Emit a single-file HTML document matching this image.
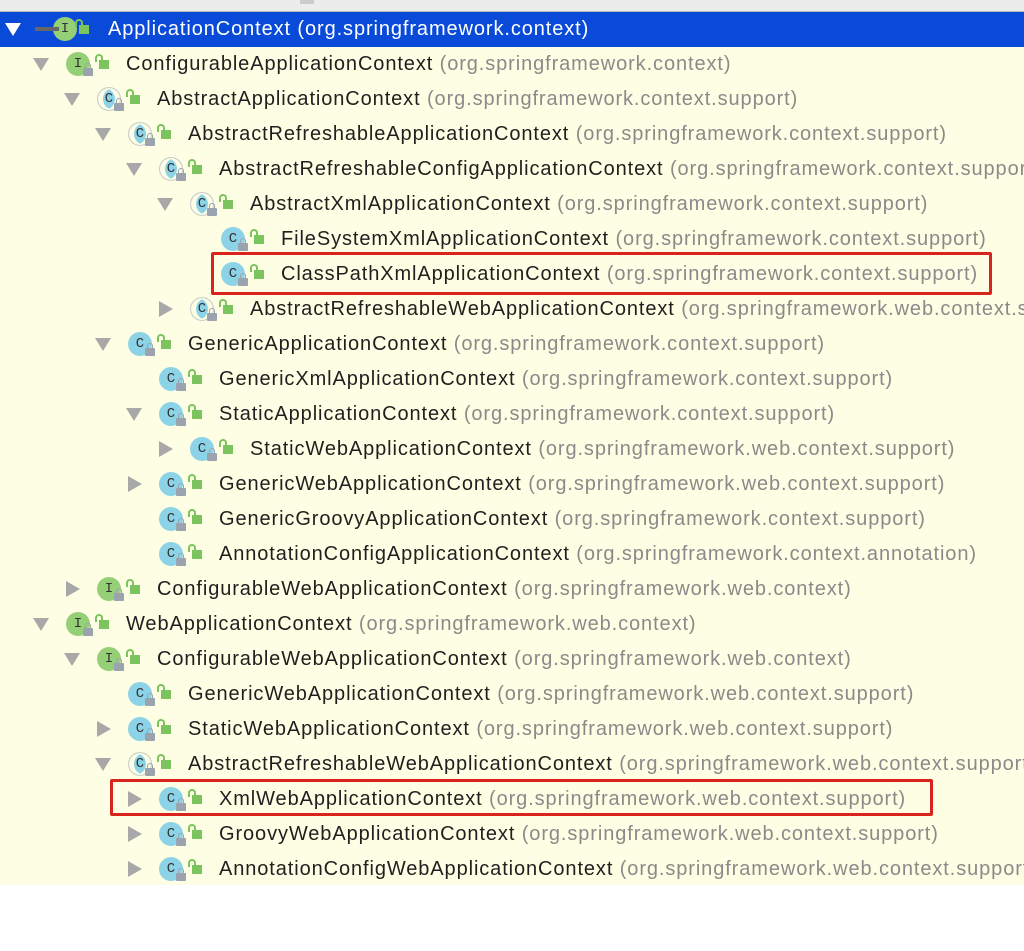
<!DOCTYPE html>
<html><head><meta charset="utf-8"><style>
body{margin:0;width:1024px;height:951px;background:#fff;position:relative;overflow:hidden;font-family:"Liberation Sans",sans-serif}
.wrap{position:absolute;left:0;top:0;width:1024px;height:951px;overflow:hidden}
.top{position:absolute;left:0;top:0;width:1024px;height:11px;background:#ececec;border-bottom:1px solid #b8b8b8}
.bg{position:absolute;left:0;top:12px;width:1024px;height:873px;background:#fefee4}
.sel{position:absolute;left:0;top:12px;width:1024px;height:35px;background:#0a4ad9}
.r{position:absolute;height:35px;white-space:nowrap;font-size:20px;letter-spacing:0.9px}
.r>*{position:absolute}
.ad{left:0;top:11px;width:0;height:0;border-left:8px solid transparent;border-right:8px solid transparent;border-top:13px solid #a8a8a8}
.ar{left:2px;top:9px;width:0;height:0;border-top:8px solid transparent;border-bottom:8px solid transparent;border-left:14px solid #a8a8a8}
.ic{left:33px;top:5px;width:24px;height:24px;border-radius:50%;font:14px "Liberation Mono",monospace;line-height:24px;text-align:center;color:#333;letter-spacing:0}
.I{background:#95cf76}
.C{background:#8dd3e8}
.A{background:#8dd3e8;box-shadow:inset 5px 0 0 #fefee4,inset -5px 0 0 #fefee4;border:1px solid #ccc;width:22px;height:22px;line-height:22px}
.lk{left:50px;top:21px;width:10px;height:8px;background:#9aa3ae;border-radius:1px}
.lk:before{content:"";position:absolute;left:2px;top:-5px;width:4px;height:5px;border:1px solid #9aa3ae;border-bottom:none;border-radius:3px 3px 0 0}
.g{left:66px;top:13px;width:10px;height:9px;background:#7cc45e}
.g:before{content:"";position:absolute;left:-4px;top:-6px;width:4px;height:6px;border:2px solid #7cc45e;border-bottom:none;border-radius:4px 4px 0 0}
.t{left:93px;top:6px;color:#1f1f1f;font-weight:normal}
.t span{color:#8a8a8a}
.box{position:absolute;border:3px solid #d8241c;border-radius:2px}
</style></head><body><div class="wrap">
<div class="top"></div><div class="bg"></div><div class="sel"></div>
<div style="position:absolute;left:300px;top:0;width:14px;height:4px;background:#ccc"></div>

<div class="r" style="left:5px;top:12px"><i class="ad" style="border-top-color:#fff"></i><b class="ic I" style="left:48px">I</b><i style="left:30px;top:15px;width:24px;height:4px;background:#666"></i><i class="g" style="left:74px"></i><b class="t" style="left:103px;color:#fff">ApplicationContext (org.springframework.context)</b></div>

<div class="r" style="left:33px;top:47px"><i class="ad"></i><b class="ic I">I</b><i class="lk"></i><i class="g"></i><b class="t">ConfigurableApplicationContext <span>(org.springframework.context)</span></b></div>
<div class="r" style="left:64px;top:82px"><i class="ad"></i><b class="ic A">C</b><i class="lk"></i><i class="g"></i><b class="t">AbstractApplicationContext <span>(org.springframework.context.support)</span></b></div>
<div class="r" style="left:95px;top:117px"><i class="ad"></i><b class="ic A">C</b><i class="lk"></i><i class="g"></i><b class="t">AbstractRefreshableApplicationContext <span>(org.springframework.context.support)</span></b></div>
<div class="r" style="left:126px;top:152px"><i class="ad"></i><b class="ic A">C</b><i class="lk"></i><i class="g"></i><b class="t">AbstractRefreshableConfigApplicationContext <span>(org.springframework.context.support)</span></b></div>
<div class="r" style="left:157px;top:187px"><i class="ad"></i><b class="ic A">C</b><i class="lk"></i><i class="g"></i><b class="t">AbstractXmlApplicationContext <span>(org.springframework.context.support)</span></b></div>
<div class="r" style="left:188px;top:222px"><b class="ic C">C</b><i class="lk"></i><i class="g"></i><b class="t">FileSystemXmlApplicationContext <span>(org.springframework.context.support)</span></b></div>
<div class="r" style="left:188px;top:257px"><b class="ic C">C</b><i class="lk"></i><i class="g"></i><b class="t">ClassPathXmlApplicationContext <span>(org.springframework.context.support)</span></b></div>
<div class="r" style="left:157px;top:292px"><i class="ar"></i><b class="ic A">C</b><i class="lk"></i><i class="g"></i><b class="t">AbstractRefreshableWebApplicationContext <span>(org.springframework.web.context.support)</span></b></div>
<div class="r" style="left:95px;top:327px"><i class="ad"></i><b class="ic C">C</b><i class="lk"></i><i class="g"></i><b class="t">GenericApplicationContext <span>(org.springframework.context.support)</span></b></div>
<div class="r" style="left:126px;top:362px"><b class="ic C">C</b><i class="lk"></i><i class="g"></i><b class="t">GenericXmlApplicationContext <span>(org.springframework.context.support)</span></b></div>
<div class="r" style="left:126px;top:397px"><i class="ad"></i><b class="ic C">C</b><i class="lk"></i><i class="g"></i><b class="t">StaticApplicationContext <span>(org.springframework.context.support)</span></b></div>
<div class="r" style="left:157px;top:432px"><i class="ar"></i><b class="ic C">C</b><i class="lk"></i><i class="g"></i><b class="t">StaticWebApplicationContext <span>(org.springframework.web.context.support)</span></b></div>
<div class="r" style="left:126px;top:467px"><i class="ar"></i><b class="ic C">C</b><i class="lk"></i><i class="g"></i><b class="t">GenericWebApplicationContext <span>(org.springframework.web.context.support)</span></b></div>
<div class="r" style="left:126px;top:502px"><b class="ic C">C</b><i class="lk"></i><i class="g"></i><b class="t">GenericGroovyApplicationContext <span>(org.springframework.context.support)</span></b></div>
<div class="r" style="left:126px;top:537px"><b class="ic C">C</b><i class="lk"></i><i class="g"></i><b class="t">AnnotationConfigApplicationContext <span>(org.springframework.context.annotation)</span></b></div>
<div class="r" style="left:64px;top:572px"><i class="ar"></i><b class="ic I">I</b><i class="lk"></i><i class="g"></i><b class="t">ConfigurableWebApplicationContext <span>(org.springframework.web.context)</span></b></div>
<div class="r" style="left:33px;top:607px"><i class="ad"></i><b class="ic I">I</b><i class="lk"></i><i class="g"></i><b class="t">WebApplicationContext <span>(org.springframework.web.context)</span></b></div>
<div class="r" style="left:64px;top:642px"><i class="ad"></i><b class="ic I">I</b><i class="lk"></i><i class="g"></i><b class="t">ConfigurableWebApplicationContext <span>(org.springframework.web.context)</span></b></div>
<div class="r" style="left:95px;top:677px"><b class="ic C">C</b><i class="lk"></i><i class="g"></i><b class="t">GenericWebApplicationContext <span>(org.springframework.web.context.support)</span></b></div>
<div class="r" style="left:95px;top:712px"><i class="ar"></i><b class="ic C">C</b><i class="lk"></i><i class="g"></i><b class="t">StaticWebApplicationContext <span>(org.springframework.web.context.support)</span></b></div>
<div class="r" style="left:95px;top:747px"><i class="ad"></i><b class="ic A">C</b><i class="lk"></i><i class="g"></i><b class="t">AbstractRefreshableWebApplicationContext <span>(org.springframework.web.context.support)</span></b></div>
<div class="r" style="left:126px;top:782px"><i class="ar"></i><b class="ic C">C</b><i class="lk"></i><i class="g"></i><b class="t">XmlWebApplicationContext <span>(org.springframework.web.context.support)</span></b></div>
<div class="r" style="left:126px;top:817px"><i class="ar"></i><b class="ic C">C</b><i class="lk"></i><i class="g"></i><b class="t">GroovyWebApplicationContext <span>(org.springframework.web.context.support)</span></b></div>
<div class="r" style="left:126px;top:852px"><i class="ar"></i><b class="ic C">C</b><i class="lk"></i><i class="g"></i><b class="t">AnnotationConfigWebApplicationContext <span>(org.springframework.web.context.support)</span></b></div>

<div class="box" style="left:211px;top:252px;width:775px;height:37px"></div>
<div class="box" style="left:110px;top:779px;width:817px;height:31px"></div>
</div></body></html>
